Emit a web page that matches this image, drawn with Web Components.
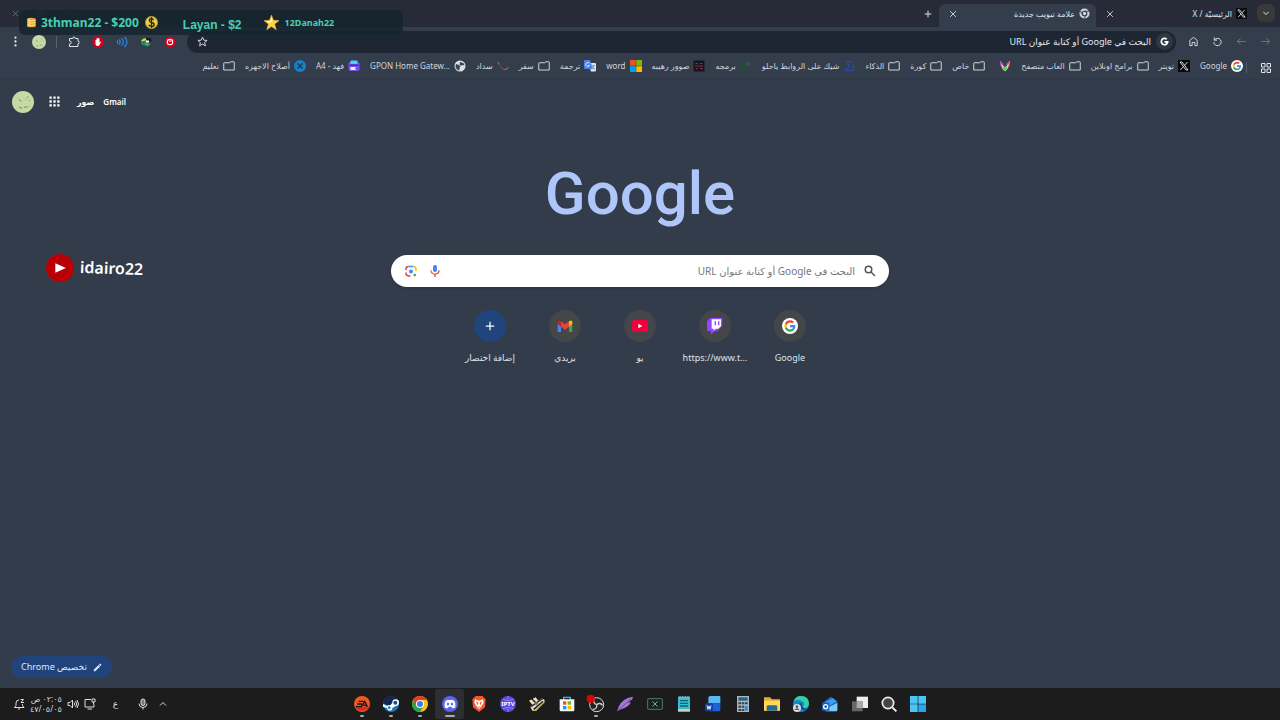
<!DOCTYPE html>
<html lang="ar" dir="rtl">
<head>
<meta charset="utf-8">
<title>علامة تبويب جديدة</title>
<style>
    html, body {
        margin: 0;
        height: 100%;
    }
    body {
        display: flex;
        flex-direction: column;
        overflow: hidden;
        background: #333c4a;
        color: #dfe3ea;
        font: 9px/12px "Noto Sans", "DejaVu Sans", sans-serif;
    }
    new-tab-page {
        flex: 1;
    }
</style>
</head>
<body>
<tab-strip></tab-strip>
<nav-bar></nav-bar>
<bookmarks-bar></bookmarks-bar>
<new-tab-page></new-tab-page>
<task-bar></task-bar>
<donor-ticker></donor-ticker>
<channel-badge></channel-badge>

<script>
const googleG = `<path fill="#ea4335" d="M24 9.500c3.500 0 6.700 1.200 9.200 3.600l6.900-6.900C35.900 2.400 30.500 0 24 0 14.600 0 6.500 5.400 2.600 13.200l8 6.200C12.400 13.700 17.700 9.500 24 9.500z"/><path fill="#4285f4" d="M47 24.500c0-1.600-.2-3.100-.4-4.500H24v9h12.900c-.6 3-2.300 5.500-4.800 7.200l7.700 6C44.400 38 47 31.800 47 24.500z"/><path fill="#fbbc05" d="M10.500 28.600c-.5-1.500-.8-3-.8-4.600s.3-3.100.8-4.600l-8-6.200C.9 16.500 0 20.100 0 24s.9 7.500 2.600 10.800z"/><path fill="#34a853" d="M24 48c6.500 0 11.900-2.100 15.900-5.800l-7.700-6c-2.200 1.500-4.900 2.300-8.200 2.300-6.300 0-11.600-4.200-13.500-9.900l-8 6.200C6.500 42.600 14.600 48 24 48z"/>`;

// every icon uses a 24 x 24 box
const icons = {
    close: '<path d="M5 5l14 14M19 5L5 19" class="s"/>',
    maximize: '<path d="M5 8h11v11H5zM9 8V5h10v10h-3" class="t"/>',
    minimize: '<path d="M3 12h18" class="t"/>',
    plus: '<path d="M12 2v20M2 12h20" class="b"/>',
    chevron: '<path d="M4 8.500l8 8 8-8" class="b"/>',
    chevronUp: '<path d="M3 16.500l9-9 9 9" class="b"/>',
    dots: '<circle cx="12" cy="3.500" r="2.500"/><circle cx="12" cy="12" r="2.500"/><circle cx="12" cy="20.500" r="2.500"/>',
    grid9: '<path d="M1 1h5v5H1zM9.500 1h5v5h-5zM18 1h5v5h-5zM1 9.500h5v5H1zM9.500 9.500h5v5h-5zM18 9.500h5v5h-5zM1 18h5v5H1zM9.500 18h5v5h-5zM18 18h5v5h-5z"/>',
    grid4: '<path d="M3 3h7v7H3zM14 3h7v7h-7zM3 14h7v7H3zM14 14h7v7h-7z" class="s"/>',
    folder: '<path d="M1.500 20V6.500q0-1 1-1H13l3-2h5.500q1 0 1 1V20z" class="s"/>',
    forward: '<path d="M3 12h18M14 5l7 7-7 7" class="s"/>',
    back: '<path d="M21 12H3M10 5l-7 7 7 7" class="s"/>',
    reload: '<path d="M5 3v6h6M5.500 8.500A8 8 0 1 1 4 13" class="s"/>',
    home: '<path d="M4 21V9.500L12 3l8 6.500V21h-5v-7H9v7z" class="s"/>',
    star: '<path d="M12 2.500l2.900 6.600 7.100.6-5.400 4.700 1.700 7L12 17.600l-6.300 3.800 1.700-7L2 9.700l7.100-.6z" class="s"/>',
    puzzle: '<path d="M3 5h6.500q0-3 2.500-3t2.500 3H20v5.500q2.500 0 2.500 2.500T20 15.500V21H3v-5q3.500 0 3.500-3T3 10z" class="s"/>',
    adblock: '<path fill="#d4001c" d="M7.500 1h9L23 7.500v9L16.500 23h-9L1 16.500v-9z"/><path fill="#fff" d="M7 8h2V5h2V4h2v1h2v8l2-2 1 1-3 6q-1 2-3 2-5 0-5-5z"/>',
    sound: '<path d="M2 9q3 3 0 6M6 7q5 5 0 10M11 5q8 7 0 14M17 2q10 10 0 20" fill="none" stroke="#2c82df" stroke-width="2.500"/>',
    idm: '<circle cx="9" cy="12" r="7" fill="#249845"/><path fill="#e8cf2c" d="M2 10q6-9 14-5l-7 5z"/><path fill="#2468c9" d="M4 15l4-5 3 6-4 3z"/><path fill="#111a22" d="M11 4h10l2 6-8 2z"/><path fill="#fff" d="M12 9h6v4h-6z"/><path fill="#39b54a" d="M13 15h9l-7 6-7-5z"/>',
    blocker: '<circle cx="12" cy="12" r="11" fill="#d4001c"/><circle cx="12" cy="12" r="6.500" fill="#fff"/><circle cx="12" cy="12" r="4.500" fill="#d4001c"/><path d="M8 7l5 5" stroke="#fff" stroke-width="2"/><circle cx="14" cy="10" r="1.500" fill="#fff"/>',
    avatar: '<circle cx="12" cy="12" r="12" fill="#c5d9a4"/><path d="M6 8l4 3M17 7l-3 3M15 18l4-1M7 18h3" stroke="#a3b889" fill="none"/><path d="M8 10l2 1M17 6v1M19 10v1M8 18l3 1M13 18l3-1" stroke="#6d8060" fill="none"/>',
    chromeMono: '<circle cx="12" cy="12" r="11" fill="#cfd4dc"/><path d="M12 7h10M7.700 14.500L2.500 6M16.300 14.500L11 23" fill="none" stroke="#343d4b" stroke-width="2"/><circle cx="12" cy="12" r="5" fill="#cfd4dc" stroke="#343d4b" stroke-width="2.500"/>',
    x: '<path fill="#08090b" d="M0 0h24v24H0z"/><path d="M4 4h4l12 16h-4zM4.500 20l6.500-7M19 4l-6 6.500" fill="none" stroke="#eee" stroke-width="1.800"/>',
    google: `<svg width="24" height="24" viewBox="-10 -10 68 68"><circle cx="24" cy="24" r="34" fill="#fff"/>${googleG}</svg>`,
    googleMono: '<path d="M18 6A8.500 8.500 0 1 0 20.500 13H12" fill="none" stroke="#fff" stroke-width="4.500"/>',
    heart: '<path fill="#b64ee0" d="M2 1l7 7-2 9q-6-5-5-16z"/><path fill="#ef55a5" d="M22 1l-7 7 2 9q6-5 5-16z"/><path fill="#f3d64e" d="M4 8l8 6 8-6-3 10-5 5-5-5z"/><path fill="#49c8a5" d="M8 11l4 4 4-4v6l-4 5-4-5z"/>',
    sigma: '<path d="M21 3H7l6 9-9 9h17V9" fill="none" stroke="#2849b8" stroke-width="2.500"/>',
    code: '<path fill="#234a35" d="M2 8h11v13H2z"/><path fill="#2d5a3d" d="M13 2l9 5-7 6-5-4z"/>',
    pixel: '<path fill="#16171e" d="M1 1h22v22H1z"/><path d="M5 7h5M14 7h5M4 12h16M6 17h4M14 17h6" stroke="#8a3049" stroke-width="2"/>',
    windows4: '<path fill="#f25022" d="M0 0h11.500v11.500H0z"/><path fill="#7fba00" d="M12.500 0H24v11.500H12.500z"/><path fill="#00a4ef" d="M0 12.500h11.500V24H0z"/><path fill="#ffb900" d="M12.500 12.500H24V24H12.500z"/>',
    translate: '<path fill="#dce5f2" d="M9 6h13q2 0 2 2v13q0 2-2 2h-8z"/><path fill="#4b83e8" d="M2 0h10l6 18H2q-2 0-2-2V2q0-2 2-2z"/><path d="M11 7A4 4 0 1 0 11 11H8" fill="none" stroke="#fff" stroke-width="1.500"/><path d="M15 11h7M20 11q-1 5-3 7M17 13l5 7" fill="none" stroke="#6a89b8" stroke-width="1.500"/>',
    swoosh: '<path d="M2 4q4 13 13 15 6 1 8-5" fill="none" stroke="#c96a58" stroke-width="2"/><path d="M3 8q6 12 14 14" fill="none" stroke="#54383c" stroke-width="2"/>',
    globe: '<circle cx="12" cy="12" r="11" fill="#dce1e8"/><path fill="#3c4655" d="M4 8l6 2 3 3-2 3v5q-7-1-8-8zM12 4l7 2 2 5-5-1-2 2-3-3z"/>',
    printer: '<path fill="#7652ed" d="M1 7q0-3 3-3h16q3 0 3 3v10q0 5-5 5H6q-5 0-5-5z"/><path fill="#4ed1f4" d="M5 1h14v7H5z"/><path fill="#e6e9ff" d="M5 14h10v6H5z"/><path fill="#3f2eb6" d="M3 9h18v3H3z"/>',
    wrench: '<circle cx="12" cy="12" r="12" fill="#1682c5"/><path d="M7 7l10 10M17 7L7 17" stroke="#173b60" stroke-width="3"/>',
    search: '<circle cx="9" cy="9" r="6.500" class="b"/><path d="M14 14l8 8" class="b"/>',
    mic: '<rect x="8" y="0" width="8" height="14" rx="4" fill="#4285f4"/><path d="M4 10.500q0 7.500 8 7.500" fill="none" stroke="#ea6a35" stroke-width="2.500"/><path d="M12 18q8 0 8-7.500M12 18v6" fill="none" stroke="#ea4335" stroke-width="2.500"/>',
    lens: '<circle cx="12" cy="13" r="4" fill="#4285f4"/><g fill="none" stroke-width="3"><path d="M2 10V8q0-5 5-5" stroke="#ea4335"/><path d="M7 3h9" stroke="#4285f4"/><path d="M16 3q6 0 6 6v3" stroke="#fbbc05"/><path d="M2 15v1q0 6 6 6h3" stroke="#ea4335"/></g><circle cx="19.500" cy="20" r="2.700" fill="#34a853"/>',
    twitch: '<path fill="#9146ff" d="M5 0L0 5v15h6v5l5-5h4l8-8V0z"/><path fill="#fff" d="M7 2h14v10l-4 4h-4l-3 3v-3H7z"/><path fill="#9146ff" d="M11.500 5h2v6h-2zM16.500 5h2v6h-2z"/>',
    youtube: '<rect x="0" y="3" width="24" height="18" rx="4" fill="#f0003c"/><path fill="#fff" d="M9.500 8.500l6 3.500-6 3.500z"/>',
    gmail: '<path fill="#4285f4" d="M1 8l5 4v9H2.500Q1 21 1 19.500z"/><path fill="#34a853" d="M18 12l5-4v11.500q0 1.500-1.500 1.500H18z"/><path fill="#fbbc04" d="M18 5l2-1q3-1 3 2v3l-5 4z"/><path fill="#c5221f" d="M6 5L4 4Q1 3 1 6v3l5 4z"/><path fill="#ea4335" d="M6 5l6 4.500L18 5v8l-6 4.500L6 13z"/>',
    pencil: '<path d="M2 18L15 5l4 4L6 22H2zM16 4l2-2q1-1 2 0l2 2q1 1 0 2l-2 2z"/>',
    speaker: '<path d="M2 9h4l5-5v16l-5-5H2zM14 9q3 3 0 6M17 6q5 6 0 12M20 4q6 8 0 16" class="s"/>',
    network: '<path d="M14 3H2v15h18v-5M7 22h9M16 2h6v6h-6zM19 8v5" class="s"/>',
    bell: '<path d="M3 19h19l-3-4v-3M12 4Q6 4 6 10v5l-3 4M10 22h4M15 3h6l-5 6h6" class="s"/>',
    micTray: '<rect x="8" y="2" width="8" height="13" rx="4" fill="#777" stroke="currentColor" stroke-width="2"/><path d="M4 11q0 8 8 8t8-8M12 19v4" class="s"/>',
    coins: '<path fill="#e7a233" d="M3 3q8-3 18 0v18q-10 3-18 0z"/><path d="M3 7q9 3 18 0M3 12q9 3 18 0M3 17q9 3 18 0" stroke="#fff0a0" stroke-width="2" fill="none"/><path fill="#ffd76d" d="M3 3h8v18H3z" opacity=".5"/>',
    dollar: '<circle cx="12" cy="12" r="12" fill="#c9a52d"/><circle cx="12" cy="12" r="10" fill="#edcf4d"/><path d="M16 8q-1-3-4-3-4 0-4 3 0 3 4 4 5 1 5 4t-5 3q-4 0-5-3M12 2v20" fill="none" stroke="#332b15" stroke-width="2.500"/>',
    goldStar: '<path fill="#f8d34f" stroke="#eeb635" d="M12 0l3 8.500 9 .5-7 5.500 2.500 9L12 18.500 4.500 23.500 7 14.500 0 9l9-.5z"/><path fill="#fff4a8" d="M12 3l2 7-6 3-4-3 6-1z"/>',
    play: '<circle cx="12" cy="12" r="12" fill="#b90006"/><path fill="#fff" d="M8 8l9 4-9 4z"/>',
    start: '<path fill="#49c6f5" d="M0 0h11.500v11.500H0zM12.500 0H24v11.500H12.500zM0 12.500h11.500V24H0z"/><path fill="#28a5ef" d="M12.500 12.500H24V24H12.500z"/>',
    taskView: '<path fill="#eee" d="M7 1h17v17H7z"/><path fill="#666" d="M0 8h16v15H0z"/><path fill="#aaa" d="M7 8h9v10H7z"/>',
    searchTask: '<circle cx="10.500" cy="10.500" r="8.500" fill="#444" stroke="#eee" stroke-width="2.500"/><path d="M17 17l6 6" stroke="#eee" stroke-width="3"/>',
    outlook: '<path fill="#1765c0" d="M1 10L13 1l10 7v13q0 2-2 2H4z"/><path fill="#3e9df2" d="M5 9l11-6 6 5-14 9z"/><path fill="#79c9ff" d="M8 18l15-8v11q0 2-2 2H6z"/><path fill="#155eb3" d="M0 10h11v12H0z"/><circle cx="5.500" cy="16" r="3" fill="none" stroke="#fff" stroke-width="2"/>',
    edge: '<circle cx="12" cy="12" r="12" fill="#1687d1"/><path fill="#38cf9c" d="M1 8Q4 0 12 0q11 0 12 11 0 6-6 7-3 0-3-2 4-4-1-8Q8 4 1 8z"/><path fill="#134b94" d="M9 11q-2 8 6 10 4 1 7-2-9 1-9-8z"/><circle cx="6" cy="18" r="6" fill="#ddd"/><circle cx="6" cy="16" r="2" fill="#555"/><path fill="#555" d="M2 21q4-5 8 0z"/>',
    explorer: '<path fill="#e7aa2d" d="M0 2h9l3 3h12v17H0z"/><path fill="#ffd75b" d="M0 7h24v15H0z"/><path fill="#286a94" d="M4 16q0-2 2-2h12q2 0 2 2v6H4z"/>',
    calculator: '<path fill="#a7b6bf" d="M3 0h18v24H3z"/><path fill="#29637d" d="M5 2h14v5H5z"/><path d="M5 11h4M10 11h4M15 11h4M5 16h4M10 16h4M5 21h4M10 21h4" stroke="#344653" stroke-width="3"/><path fill="#258cd1" d="M15 15h4v7h-4z"/>',
    word: '<path fill="#5bb6f4" d="M8 0h14q1 0 1 1v10H5V3q0-3 3-3z"/><path fill="#1c63d6" d="M5 11h18v10q0 2-2 2H8q-3 0-3-3z"/><rect y="11" width="12" height="12" rx="2" fill="#123fa1"/><path d="M3 14l1.500 6L6 15l1.500 5L9 14" fill="none" stroke="#fff" stroke-width="1.300"/>',
    notepad: '<path fill="#39bed1" d="M3 1h18v20H3z"/><path fill="#c5f0f2" d="M3 20h18v4H3z"/><path d="M6 0v3M10 0v3M14 0v3M18 0v3" stroke="#ddd"/><path d="M6 7h12M6 11h12M6 15h12" stroke="#176075" stroke-width="2"/><path fill="#df8847" d="M3 22h18v2H3z"/>',
    excel: '<rect x="1" y="4" width="22" height="16" rx="1" fill="#16221e" stroke="#4d8068" stroke-width="1.500"/><path d="M8 8l8 8M16 8l-8 8" stroke="#83af9a" stroke-width="1.500"/>',
    feather: '<path fill="#a477d7" d="M24 1Q9 3 3 15l-3 8 6-3q12-3 15-11l-5 1 7-5z"/><path d="M1 22L21 4" stroke="#5f398e"/>',
    obs: '<circle cx="13" cy="13" r="10.500" fill="#222" stroke="#ddd" stroke-width="1.500"/><path d="M13 13Q7 11 9 5M13 13q5-4 9 1M13 13q1 7-6 7" fill="none" stroke="#ccc" stroke-width="2"/><circle cx="4" cy="4" r="6" fill="#e40000"/>',
    store: '<path d="M7 6V2h10v4" fill="none" stroke="#35bcef" stroke-width="2"/><path fill="#f3f7fa" d="M1 5h22v16q0 2-2 2H3q-2 0-2-2z"/><path fill="#f25022" d="M6 8h5v5H6z"/><path fill="#7fba00" d="M13 8h5v5h-5z"/><path fill="#00a4ef" d="M6 15h5v5H6z"/><path fill="#ffb900" d="M13 15h5v5h-5z"/>',
    notes: '<path fill="#e8e2bf" d="M0 7l10-5 4 5 6-4 4 4-13 15H5l-3-6 3-3z"/><path d="M4 4l7 7M3 16l10-7 9-6M7 20L21 8" stroke="#272319" stroke-width="2.200"/><path d="M9 22L23 9" stroke="#b8a958" stroke-width="2"/><path fill="#5870b0" d="M10 8l4 3-3 3-3-3z"/>',
    iptv: '<circle cx="12" cy="12" r="12" fill="#5b48df"/><path d="M4 5q8 4 16 0M4 19q8-4 16 0M12 0v5M12 19v5" fill="none" stroke="#ad9cff"/><text x="12" y="15" text-anchor="middle" font-size="9" font-weight="700" fill="#fff">IPTV</text>',
    brave: '<path fill="#fb542b" d="M7 0h10l5 5-1 12-9 7-9-7L2 5z"/><path fill="#fff" d="M6 5l6 2 6-2 1 5-3 5-4 5-4-5-3-5z"/><path fill="#fb542b" d="M7 8l4 2-1 4zM17 8l-4 2 1 4zM10 16h4l-2 2z"/>',
    discord: '<circle cx="12" cy="12" r="12" fill="#5865f2"/><path fill="#fff" d="M5 8q3-3 5-2h4q2-1 5 2 2 5 1 9-2 2-5 1l-1-2h-4l-1 2q-3 1-5-1-1-4 1-9z"/><circle cx="9" cy="12" r="1.800" fill="#5865f2"/><circle cx="15" cy="12" r="1.800" fill="#5865f2"/>',
    chrome: '<circle cx="12" cy="12" r="12" fill="#fbc116"/><path fill="#e33b2e" d="M12 12V6h10.500A12 12 0 0 0 1.600 6l5.200 9z"/><path fill="#29a34a" d="M12 12l-5.200 3-5.200-9A12 12 0 0 0 12 24l5.200-9z"/><circle cx="12" cy="12" r="6" fill="#fff"/><circle cx="12" cy="12" r="4.600" fill="#3b7ded"/>',
    steam: '<circle cx="12" cy="12" r="12" fill="#1c76b5"/><path fill="#14284a" d="M0 11a12 12 0 0 1 24 0q-12 7-24 0z"/><path fill="#fff" d="M0 12l6 3q3-2 5-1l3-4q0-5 5-5t5 5q0 4-5 5l-5 3q0 4-4 4-3 0-4-4l-6-2z"/><circle cx="18.500" cy="10" r="3" fill="#1b4f83"/><circle cx="9.500" cy="17.500" r="2" fill="#1c76b5"/>',
    ea: '<circle cx="12" cy="12" r="12" fill="#f05a25"/><path fill="#d72e24" d="M1 15q11 3 22 0a12 12 0 0 1-22 0z"/><path d="M7 8h7M5 12h7M3 16h8l5-8 4 8M14 14h5" fill="none" stroke="#1b1517" stroke-width="2"/>'
};

class BaseElement extends HTMLElement {
    constructor() {
        super();
        this.attachShadow({ mode: 'open' });
    }
    connectedCallback() {
        this.shadowRoot.innerHTML = this.template;
    }
    // rules shared by every control
    get reset() {
        return `
            * { box-sizing: border-box; }
            a { color: inherit; text-decoration: none; }
            button, input { font: inherit; color: inherit; border: 0; padding: 0; margin: 0; background: none; }
            button, a { display: inline-flex; align-items: center; justify-content: center; }
            input { min-width: 0; outline: none; }
        `;
    }
}

class UiIcon extends BaseElement {
    get template() {
        return `
        <style>
            :host { display: inline-block; flex: none; width: var(--size, 12px); height: var(--size, 12px); }
            svg { display: block; width: 100%; height: 100%; direction: ltr; fill: currentColor; overflow: visible; }
            .s, .t, .b { fill: none; stroke: currentColor; stroke-width: 2; }
            .t { stroke-width: 1.5; }
            .b { stroke-width: 3; }
        </style>
        <svg viewBox="0 0 24 24" aria-hidden="true">${icons[this.getAttribute('name')] || ''}</svg>`;
    }
}

class BrowserTab extends BaseElement {
    get template() {
        return `
        <style>
            ${this.reset}
            :host { display: flex; align-items: center; width: 157px; height: 23px; padding: 0 6px 4px 8px; box-sizing: border-box; border-radius: 6px 6px 0 0; font-size: 8px; }
            :host([active]) { background: #343d4b; }
            a { flex: 1; justify-content: flex-start; gap: 4px; --size: 11px; }
            button { --size: 10px; width: 12px; height: 12px; }
        </style>
        <a href="#"><ui-icon name="${this.getAttribute('icon')}"></ui-icon><slot></slot></a>
        <button aria-label="إغلاق"><ui-icon name="close"></ui-icon></button>`;
    }
}

class TabStrip extends BaseElement {
    get template() {
        return `
        <style>
            ${this.reset}
            :host { display: flex; align-items: flex-end; height: 27px; padding: 0 5px; background: #272b37; }
            .list { width: 18px; height: 18px; margin: 0 0 5px 4px; border-radius: 6px; background: #3a3939; --size: 8px; }
            .add { width: 22px; height: 27px; --size: 8px; }
            .window { display: flex; margin-right: auto; height: 27px; color: #777b84; --size: 9px; }
            .window button { width: 30px; }
            .window button:last-child { width: 20px; }
        </style>
        <button class="list" aria-label="البحث في علامات التبويب"><ui-icon name="chevron"></ui-icon></button>
        <browser-tab icon="x">الرئيسيّة / X</browser-tab>
        <browser-tab icon="chromeMono" active>علامة تبويب جديدة</browser-tab>
        <button class="add" aria-label="علامة جديدة"><ui-icon name="plus"></ui-icon></button>
        <div class="window">
            <button aria-label="تصغير"><ui-icon name="minimize"></ui-icon></button>
            <button aria-label="تكبير"><ui-icon name="maximize"></ui-icon></button>
            <button aria-label="إغلاق النافذة"><ui-icon name="close"></ui-icon></button>
        </div>`;
    }
}

class NavBar extends BaseElement {
    get template() {
        const extensions = ['blocker', 'idm', 'sound', 'adblock', 'puzzle'];
        return `
        <style>
            ${this.reset}
            :host { display: flex; align-items: center; height: 29px; padding: 0 3px; background: #343d4b; }
            button { width: 24px; height: 24px; --size: 11px; }
            .off { color: #727a86; }
            .address { flex: 1; display: flex; align-items: center; height: 22px; padding: 0 3px; margin: 0 5px; border-radius: 11px; background: #1e2634; }
            .site { display: flex; padding: 4px; border-radius: 50%; background: #303846; --size: 9px; }
            input { flex: 1; height: 20px; padding: 0 5px; font-size: 9px; line-height: 16px; }
            input::placeholder { color: #e4e8ee; opacity: 1; }
            .extensions { display: flex; }
            .extensions button { --size: 12px; }
            .line { width: 1px; height: 12px; margin: 0 5px; background: #58616e; }
            .profile { --size: 14px; }
        </style>
        <button class="off" aria-label="إلى الأمام"><ui-icon name="forward"></ui-icon></button>
        <button class="off" aria-label="رجوع"><ui-icon name="back"></ui-icon></button>
        <button aria-label="إعادة التحميل"><ui-icon name="reload"></ui-icon></button>
        <button aria-label="الصفحة الرئيسية"><ui-icon name="home"></ui-icon></button>
        <div class="address">
            <span class="site"><ui-icon name="googleMono"></ui-icon></span>
            <input type="text" aria-label="شريط العناوين" placeholder="البحث في Google أو كتابة عنوان URL">
            <button aria-label="إضافة إشارة"><ui-icon name="star"></ui-icon></button>
        </div>
        <div class="extensions">
            ${extensions.map(name => `<button aria-label="${name}"><ui-icon name="${name}"></ui-icon></button>`).join('')}
        </div>
        <span class="line"></span>
        <button class="profile" aria-label="الملف الشخصي"><ui-icon name="avatar"></ui-icon></button>
        <button aria-label="القائمة"><ui-icon name="dots"></ui-icon></button>`;
    }
}

class BookmarkItem extends BaseElement {
    get template() {
        return `
        <style>
            ${this.reset}
            :host { display: block; flex: none; color: #d0d5dd; font-size: 8px; }
            a { direction: rtl; gap: 4px; white-space: nowrap; }
            :host([dir="ltr"]) span { direction: ltr; }
        </style>
        <a href="#"><ui-icon name="${this.getAttribute('icon')}"></ui-icon><span><slot></slot></span></a>`;
    }
}

class BookmarksBar extends BaseElement {
    get template() {
        const items = [
            ['google', 'Google'], ['x', 'تويتر'], ['folder', 'برامج اونلاين'], ['folder', 'العاب متصفح'],
            ['heart', ''], ['folder', 'خاص'], ['folder', 'كورة'], ['folder', 'الذكاء'],
            ['sigma', 'شيك على الروابط ياحلو'], ['code', 'برمجه'], ['pixel', 'صوور رهيبه'],
            ['windows4', 'word'], ['translate', 'ترجمة'], ['folder', 'سفر'], ['swoosh', 'سداد'],
            ['globe', 'GPON Home Gatew...', 'ltr'], ['printer', 'فهد - A4'], ['wrench', 'أصلاح الاجهزه'], ['folder', 'تعليم']
        ];
        return `
        <style>
            ${this.reset}
            :host { display: flex; align-items: center; height: 24px; padding: 0 8px; box-sizing: border-box; background: #343d4b; border-bottom: 1px solid #303947; overflow: hidden; }
            .line { width: 1px; height: 11px; margin: 0 13px 0 3px; background: #515c6a; }
            nav { display: flex; gap: 10px; }
        </style>
        <button aria-label="كل الإشارات"><ui-icon name="grid4"></ui-icon></button>
        <span class="line"></span>
        <nav>${items.map(([icon, text, dir]) => `<bookmark-item icon="${icon}" dir="${dir || 'rtl'}">${text}</bookmark-item>`).join('')}</nav>`;
    }
}

class SearchBox extends BaseElement {
    get template() {
        return `
        <style>
            ${this.reset}
            :host { display: block; width: min(498px, 90vw); }
            form { display: flex; align-items: center; height: 32px; padding: 0 13px 0 8px; border-radius: 16px; background: #fff; color: #50545a; box-shadow: 0 1px 3px #20283366; }
            input { flex: 1; height: 28px; padding: 0 9px; font-size: 10px; line-height: 16px; }
            input::placeholder { color: #74777b; opacity: 1; }
            button { width: 24px; height: 24px; }
        </style>
        <form>
            <ui-icon name="search"></ui-icon>
            <input type="text" aria-label="بحث" placeholder="البحث في Google أو كتابة عنوان URL">
            <button type="button" aria-label="البحث الصوتي"><ui-icon name="mic"></ui-icon></button>
            <button type="button" aria-label="البحث بالصور"><ui-icon name="lens"></ui-icon></button>
        </form>`;
    }
}

class ShortcutTile extends BaseElement {
    get template() {
        return `
        <style>
            ${this.reset}
            :host { display: block; width: 75px; }
            a { direction: rtl; display: flex; flex-direction: column; gap: 10px; white-space: nowrap; }
            .disc { display: flex; align-items: center; justify-content: center; width: 32px; height: 32px; border-radius: 50%; background: #444649; --size: 16px; }
            :host([add]) .disc { background: #20457d; color: #fff; --size: 10px; }
            :host([dir="ltr"]) .label { direction: ltr; }
        </style>
        <a href="#"><span class="disc"><ui-icon name="${this.getAttribute('icon')}"></ui-icon></span><span class="label"><slot></slot></span></a>`;
    }
}

class NewTabPage extends BaseElement {
    get template() {
        return `
        <style>
            ${this.reset}
            :host { display: flex; flex-direction: column; min-height: 0; }
            header { display: flex; align-items: center; justify-content: flex-end; gap: 9px; height: 43px; padding: 0 12px; font-size: 8px; font-weight: 600; color: #fff; }
            .apps { margin: 0 8px 0 6px; --size: 11px; }
            .account { --size: 22px; }
            main { flex: 1; display: flex; flex-direction: column; align-items: center; padding-top: 33px; }
            .logo { height: 99px; font: 500 60px/76px Roboto, sans-serif; color: #afc6fa; direction: ltr; }
            .shortcuts { display: flex; margin-top: 23px; }
            footer { display: flex; justify-content: flex-end; padding: 0 11px 10px; }
            footer button { gap: 6px; height: 22px; padding: 0 10px; border-radius: 11px; background: #20437c; --size: 9px; color: #dce8ff; }
        </style>
        <header>
            <a href="#">Gmail</a>
            <a href="#">صور</a>
            <button class="apps" aria-label="التطبيقات"><ui-icon name="grid9"></ui-icon></button>
            <button class="account" aria-label="الحساب"><ui-icon name="avatar"></ui-icon></button>
        </header>
        <main>
            <div class="logo">Google</div>
            <search-box></search-box>
            <div class="shortcuts">
                <shortcut-tile icon="google">Google</shortcut-tile>
                <shortcut-tile icon="twitch" dir="ltr">https://www.t...</shortcut-tile>
                <shortcut-tile icon="youtube">يو</shortcut-tile>
                <shortcut-tile icon="gmail">بريدي</shortcut-tile>
                <shortcut-tile icon="plus" add>إضافة اختصار</shortcut-tile>
            </div>
        </main>
        <footer><button><ui-icon name="pencil"></ui-icon><span>تخصيص Chrome</span></button></footer>`;
    }
}

class TaskBar extends BaseElement {
    get template() {
        const apps = ['start', 'searchTask', 'taskView', 'outlook', 'edge', 'explorer', 'calculator', 'word', 'notepad', 'excel',
            'feather', 'obs', 'store', 'notes', 'iptv', 'brave', 'discord', 'chrome', 'steam', 'ea'];
        const running = ['obs', 'chrome', 'steam', 'ea'];
        const state = name => name === 'discord' ? 'current' : running.includes(name) ? 'running' : '';
        return `
        <style>
            ${this.reset}
            :host { display: grid; grid-template-columns: 1fr minmax(0, 586px) 1fr; align-items: center; height: 32px; background: #1c1c1c; color: #ddd; }
            .apps { grid-column: 2; display: grid; grid-template-columns: repeat(20, 1fr); --size: 16px; }
            .apps button { position: relative; height: 30px; border-radius: 3px; }
            .current { background: #2c2e32; }
            .running::after, .current::after { content: ""; position: absolute; bottom: 2px; width: 4px; height: 2px; border-radius: 1px; background: #aaa; }
            .current::after { width: 10px; }
            .tray { display: flex; align-items: center; justify-content: flex-end; gap: 5px; padding-left: 13px; }
            .tray .up { --size: 8px; margin-left: 5px; }
            .tray .lang { margin: 0 14px 0 12px; }
            time { font-size: 8px; line-height: 10px; text-align: right; }
        </style>
        <div class="apps">${apps.map(name => `<button class="${state(name)}" aria-label="${name}"><ui-icon name="${name}"></ui-icon></button>`).join('')}</div>
        <div class="tray">
            <button class="up" aria-label="الرموز المخفية"><ui-icon name="chevronUp"></ui-icon></button>
            <button aria-label="الميكروفون"><ui-icon name="micTray"></ui-icon></button>
            <button class="lang">ع</button>
            <button aria-label="الشبكة"><ui-icon name="network"></ui-icon></button>
            <button aria-label="الصوت"><ui-icon name="speaker"></ui-icon></button>
            <time>٠٢:٠٥ ص<br>٤٧/٠٥/٠٥</time>
            <button aria-label="الإشعارات"><ui-icon name="bell"></ui-icon></button>
        </div>`;
    }
}

// stream overlays, on top of the browser
class DonorTicker extends BaseElement {
    get template() {
        return `
        <style>
            :host { position: absolute; left: 19px; top: 10px; display: flex; align-items: center; width: 384px; height: 25px; padding: 0 7px; box-sizing: border-box; direction: ltr; border-radius: 6px; background: #15242ed9; color: #46cfb4; font-weight: 700; }
            span { display: flex; align-items: center; gap: 4px; white-space: nowrap; }
            .first { font-size: 12px; --size: 11px; }
            .first ui-icon:last-child { --size: 13px; margin-left: 2px; }
            .second { margin: 4px 22px 0 25px; font: 700 12px/14px "Liberation Sans", sans-serif; }
            .third { gap: 6px; --size: 15px; }
        </style>
        <span class="first"><ui-icon name="coins"></ui-icon>3thman22 - $200<ui-icon name="dollar"></ui-icon></span>
        <span class="second">Layan - $2</span>
        <span class="third"><ui-icon name="goldStar"></ui-icon>12Danah22</span>`;
    }
}

class ChannelBadge extends BaseElement {
    get template() {
        return `
        <style>
            :host { position: absolute; left: 46px; top: 254px; display: flex; align-items: center; gap: 6px; direction: ltr; color: #fff; font-size: 16px; line-height: 28px; font-weight: 600; --size: 28px; }
            span { transform: rotate(2deg); }
        </style>
        <ui-icon name="play"></ui-icon><span>idairo22</span>`;
    }
}

window.customElements.define('ui-icon', UiIcon);
window.customElements.define('browser-tab', BrowserTab);
window.customElements.define('tab-strip', TabStrip);
window.customElements.define('nav-bar', NavBar);
window.customElements.define('bookmark-item', BookmarkItem);
window.customElements.define('bookmarks-bar', BookmarksBar);
window.customElements.define('search-box', SearchBox);
window.customElements.define('shortcut-tile', ShortcutTile);
window.customElements.define('new-tab-page', NewTabPage);
window.customElements.define('task-bar', TaskBar);
window.customElements.define('donor-ticker', DonorTicker);
window.customElements.define('channel-badge', ChannelBadge);
</script>
</body>
</html>
